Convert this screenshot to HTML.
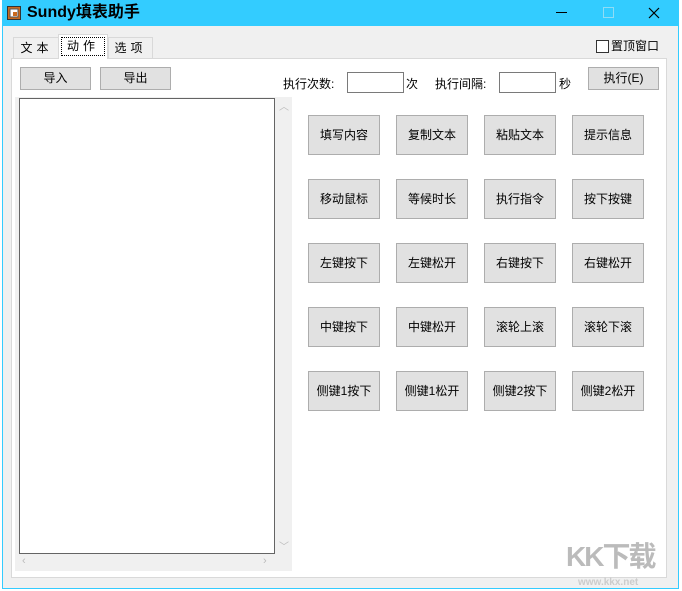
<html><head><style>
body{margin:0;width:682px;height:591px;background:#fff;font-family:"Liberation Sans","Noto Sans CJK SC",sans-serif;font-size:12px;position:relative;overflow:hidden}
.a{position:absolute}
.btn{position:absolute;background:#e1e1e1;border:1px solid #adadad;box-sizing:border-box;text-align:center;color:#000;font-size:12px}
.g{width:72px;height:40px;line-height:38px}
.in{position:absolute;background:#fff;border:1px solid #7a7a7a;box-sizing:border-box;height:21px}
</style></head><body>
<div class="a" style="left:2px;top:0;width:677px;height:589px;background:#f0f0f0;border:1px solid #33ccff;border-top:none;box-sizing:border-box"></div>
<div class="a" style="left:2px;top:0;width:677px;height:26px;background:#33ccff"></div>
<svg class="a" style="left:7px;top:6px" width="14" height="14"><rect x="0.5" y="0.5" width="13" height="13" fill="#c96a1f" stroke="#333"/><rect x="3" y="3" width="8" height="8" fill="#fff" stroke="#555"/><rect x="6" y="6" width="4" height="4" fill="#c96a1f"/></svg>
<div class="a" style="left:27px;top:3px;font-size:16px;font-weight:bold;line-height:20px">Sundy填表助手</div>
<div class="a" style="left:556px;top:12px;width:11px;height:1px;background:#000"></div>
<div class="a" style="left:603px;top:7px;width:9px;height:9px;border:1px solid #8fdcf5"></div>
<svg class="a" style="left:648px;top:7px" width="12" height="12"><path d="M1 1L11 11M11 1L1 11" stroke="#000" stroke-width="1.2"/></svg>
<div class="a" style="left:11px;top:58px;width:656px;height:520px;background:#fff;border:1px solid #d9d9d9;box-sizing:border-box"></div>
<div class="a" style="left:13px;top:37px;width:45px;height:21px;border:1px solid #d9d9d9;border-bottom:none;line-height:20px;text-align:center;letter-spacing:4px">文本</div>
<div class="a" style="left:58px;top:34px;width:50px;height:25px;background:#fff;border:1px solid #d9d9d9;border-bottom:none;box-sizing:border-box"><div style="margin:2px;border:1px dotted #000;height:17px;line-height:17px;text-align:center;letter-spacing:4px">动作</div></div>
<div class="a" style="left:108px;top:37px;width:43px;height:21px;border:1px solid #d9d9d9;border-bottom:none;line-height:20px;text-align:center;letter-spacing:4px">选项</div>
<div class="a" style="left:596px;top:40px;width:11px;height:11px;border:1px solid #333;background:#fff"></div>
<div class="a" style="left:611px;top:38px;line-height:16px">置顶窗口</div>
<div class="btn" style="left:20px;top:67px;width:71px;height:23px;line-height:21px">导入</div>
<div class="btn" style="left:100px;top:67px;width:71px;height:23px;line-height:21px">导出</div>
<div class="a" style="left:283px;top:75px">执行次数:</div>
<div class="in" style="left:347px;top:72px;width:57px"></div>
<div class="a" style="left:406px;top:75px">次</div>
<div class="a" style="left:435px;top:75px">执行间隔:</div>
<div class="in" style="left:499px;top:72px;width:57px"></div>
<div class="a" style="left:559px;top:75px">秒</div>
<div class="btn" style="left:588px;top:67px;width:71px;height:23px;line-height:21px">执行(E)</div>
<div class="a" style="left:15px;top:97px;width:277px;height:474px;background:#f0f0f0"></div>
<div class="a" style="left:19px;top:98px;width:256px;height:456px;background:#fff;border:1px solid #646464;box-sizing:border-box"></div>
<div class="a" style="left:279px;top:98px;color:#bbb;font-size:10px">︿</div>
<div class="a" style="left:279px;top:538px;color:#bbb;font-size:10px">﹀</div>
<div class="a" style="left:22px;top:555px;color:#bbb;font-size:11px">‹</div>
<div class="a" style="left:263px;top:555px;color:#bbb;font-size:11px">›</div>
<div class="btn g" style="left:308px;top:115px">填写内容</div><div class="btn g" style="left:396px;top:115px">复制文本</div><div class="btn g" style="left:484px;top:115px">粘贴文本</div><div class="btn g" style="left:572px;top:115px">提示信息</div>
<div class="btn g" style="left:308px;top:179px">移动鼠标</div><div class="btn g" style="left:396px;top:179px">等候时长</div><div class="btn g" style="left:484px;top:179px">执行指令</div><div class="btn g" style="left:572px;top:179px">按下按键</div>
<div class="btn g" style="left:308px;top:243px">左键按下</div><div class="btn g" style="left:396px;top:243px">左键松开</div><div class="btn g" style="left:484px;top:243px">右键按下</div><div class="btn g" style="left:572px;top:243px">右键松开</div>
<div class="btn g" style="left:308px;top:307px">中键按下</div><div class="btn g" style="left:396px;top:307px">中键松开</div><div class="btn g" style="left:484px;top:307px">滚轮上滚</div><div class="btn g" style="left:572px;top:307px">滚轮下滚</div>
<div class="btn g" style="left:308px;top:371px">侧键1按下</div><div class="btn g" style="left:396px;top:371px">侧键1松开</div><div class="btn g" style="left:484px;top:371px">侧键2按下</div><div class="btn g" style="left:572px;top:371px">侧键2松开</div>
<div class="a" style="left:566px;top:535px;font-size:28px;color:#bbb;font-weight:bold;letter-spacing:-2px">KK下载</div>
<div class="a" style="left:578px;top:577px;font-size:10px;color:#ccc;font-weight:bold">www.kkx.net</div>
</body></html>
